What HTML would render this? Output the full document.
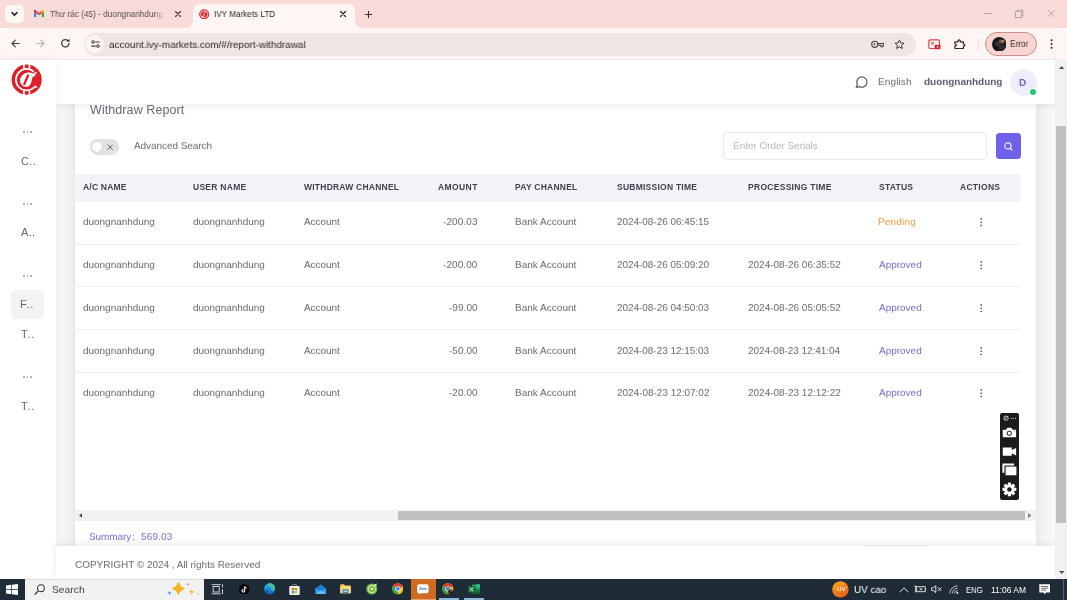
<!DOCTYPE html>
<html>
<head>
<meta charset="utf-8">
<title>IVY Markets LTD</title>
<style>
*{box-sizing:border-box;margin:0;padding:0}
html,body{width:1067px;height:600px;overflow:hidden;background:#fff;font-family:"Liberation Sans",sans-serif;}
#root{position:relative;width:1067px;height:600px;overflow:hidden;background:#fff}
#root>div,#root>svg{position:absolute}
.t{white-space:nowrap;line-height:1;will-change:transform}

/* ---------- browser chrome ---------- */
#tabbar{left:0;top:0;width:1067px;height:28px;background:#f9dcd9}
#toolbar{left:0;top:28px;width:1067px;height:32px;background:#fdf6f5;border-radius:7px 7px 0 0}
#toolline{left:0;top:59.2px;width:1067px;height:0.8px;background:#f7eeec}
#tabsearch{left:5px;top:5px;width:18.5px;height:17.5px;border-radius:5px;background:#fdf6f5}
#activetab{left:193px;top:4px;width:161.5px;height:25px;background:#fdf6f5;border-radius:7px 7px 0 0}
#urlpill{left:84.2px;top:32.6px;width:831.5px;height:23px;border-radius:11.5px;background:#f1e5e4}
#sitecirc{left:85.2px;top:34.7px;width:18.8px;height:18.8px;border-radius:50%;background:#fcf3f2}
#errpill{left:985px;top:32px;width:52px;height:24px;border-radius:12px;background:#f9d5d1;border:1px solid #c9918b}

/* ---------- app ---------- */
#appbg{left:0;top:60px;width:1056px;height:519px;background:#f8f8f8}
#sidebar{left:0;top:60px;width:55.5px;height:519px;background:#fff;box-shadow:0 0 10px rgba(34,41,47,.06)}
#header{left:55.5px;top:60px;width:999.5px;height:43.7px;background:#fff;box-shadow:0 2px 6px rgba(34,41,47,.09)}
#card{left:75px;top:96px;width:961px;height:452px;background:#fff;box-shadow:0 2px 16px rgba(34,41,47,.13)}
#footer{left:55.5px;top:546px;width:999.5px;height:33px;background:#fff;box-shadow:0 -2px 6px rgba(34,41,47,.09)}
#thead{left:75px;top:173.5px;width:945.5px;height:28px;background:#f3f3f8}
.rowline{left:75px;width:945.5px;height:1px;background:#f2f2f5}
.kebab{left:980.1px;width:3px}
.kebab i{display:block;width:1.8px;height:1.8px;border-radius:1px;background:#625e73;margin-bottom:0.7px}
.sdots{left:23px;width:10px;height:2px}
.sdots i{position:absolute;top:0;width:1.6px;height:1.6px;border-radius:1px;background:#9a9a9a}

/* scrollbars */
#vscroll{left:1055px;top:60px;width:12px;height:519px;background:#f1f1f1}
#vthumb{left:1056.3px;top:125.6px;width:9.7px;height:397px;background:#c1c1c1}
#hscroll{left:75px;top:509.5px;width:961px;height:11px;background:#f1f1f1}
#hthumb{left:398px;top:510.5px;width:626.5px;height:9px;background:#c1c1c1}

/* taskbar */
#taskbar{left:0;top:578.6px;width:1067px;height:21.4px;background:#1f2b36}
#tsearch{left:25px;top:579.1px;width:179.3px;height:21px;background:#f2f2f2;border-top:0.6px solid #dadada}
#zalobg{left:411px;top:578.6px;width:25px;height:21.4px;background:#cf6a20}
</style>
</head>
<body>
<div id="root">

<!-- TAB BAR -->
<div id="tabbar"></div>
<div id="tabsearch"></div>
<div id="toolbar"></div>
<div id="toolline"></div>
<div id="activetab"></div>

<!-- inverse corners of active tab -->
<svg style="left:185px;top:20px" width="8" height="8" viewBox="0 0 8 8"><path d="M8 0 V8 H0 A8 8 0 0 0 8 0Z" fill="#fdf6f5"/></svg>
<svg style="left:354.5px;top:20px" width="8" height="8" viewBox="0 0 8 8"><path d="M0 0 V8 H8 A8 8 0 0 1 0 0Z" fill="#fdf6f5"/></svg>
<!-- tab search chevron -->
<svg style="left:10px;top:10px" width="9" height="8" viewBox="0 0 9 8"><path d="M2 2.6 L4.5 5.1 L7 2.6" fill="none" stroke="#2a2424" stroke-width="1.5" stroke-linecap="round" stroke-linejoin="round"/></svg>
<!-- gmail icon -->
<svg style="left:34px;top:9.8px" width="10.2" height="7.5" viewBox="0 0 22 16">
 <path d="M0 2.2 V14.5 A1.5 1.5 0 0 0 1.5 16 H5 V6.2Z" fill="#4285f4"/>
 <path d="M22 2.2 V14.5 A1.5 1.5 0 0 1 20.5 16 H17 V6.2Z" fill="#34a853"/>
 <path d="M17 1.5 L19.2 0 A1.8 1.8 0 0 1 22 1.6 V3 L17 6.8Z" fill="#fbbc04"/>
 <path d="M5 1.5 L2.8 0 A1.8 1.8 0 0 0 0 1.6 V3 L5 6.8Z" fill="#c5221f"/>
 <path d="M5 1.5 L11 6 L17 1.5 V6.8 L11 11.3 L5 6.8Z" fill="#ea4335"/>
</svg>
<!-- tab close x (inactive) -->
<svg style="left:174px;top:10px" width="8" height="8" viewBox="0 0 8 8"><path d="M1.5 1.5 L6.5 6.5 M6.5 1.5 L1.5 6.5" stroke="#463e3e" stroke-width="1.15" stroke-linecap="round"/></svg>
<!-- favicon active tab -->
<svg style="left:198.9px;top:8.6px" width="10.4" height="10.4" viewBox="0 0 32 32">
 <circle cx="16" cy="16" r="15.5" fill="#e0202b"/>
 <circle cx="16" cy="16" r="11.3" fill="none" stroke="#fff" stroke-width="2.2"/>
 <path d="M20.5 9.5 C14 10 12 14 15 16.5 C18 19 16 23 10 23.5" fill="none" stroke="#fff" stroke-width="3" stroke-linecap="round"/>
</svg>
<!-- tab close x (active) -->
<svg style="left:339.3px;top:9.7px" width="8" height="8" viewBox="0 0 8 8"><path d="M1.5 1.5 L6.5 6.5 M6.5 1.5 L1.5 6.5" stroke="#2a2424" stroke-width="1.25" stroke-linecap="round"/></svg>
<!-- new tab plus -->
<svg style="left:364px;top:9.5px" width="9" height="9" viewBox="0 0 9 9"><path d="M4.5 1.2 V7.8 M1.2 4.5 H7.8" stroke="#3a3232" stroke-width="1.1" stroke-linecap="round"/></svg>
<!-- window controls -->
<svg style="left:984px;top:9px" width="72" height="10" viewBox="0 0 72 10">
 <path d="M0.5 4.5 H8" stroke="#b3a5a3" stroke-width="1" fill="none"/>
 <path d="M31.5 2.5 H37.5 V8.5 H31.5Z M33 2.3 V1 H39 V7 H37.7" stroke="#b3a5a3" stroke-width="1" fill="none"/>
 <path d="M63.6 1 L70.4 7.8 M70.4 1 L63.6 7.8" stroke="#b3a5a3" stroke-width="1" fill="none"/>
</svg>
<!-- back -->
<svg style="left:10.9px;top:39.3px" width="9" height="9" viewBox="0 0 10 10"><path d="M9.2 5 H1.4 M4.8 1.3 L1.1 5 L4.8 8.7" fill="none" stroke="#423b3b" stroke-width="1.25" stroke-linecap="round" stroke-linejoin="round"/></svg>
<!-- forward -->
<svg style="left:35.7px;top:39.3px" width="9" height="9" viewBox="0 0 10 10"><path d="M0.8 5 H8.6 M5.2 1.3 L8.9 5 L5.2 8.7" fill="none" stroke="#bdb2b0" stroke-width="1.25" stroke-linecap="round" stroke-linejoin="round"/></svg>
<!-- reload -->
<svg style="left:60.4px;top:38.2px" width="10.6" height="10.6" viewBox="0 0 11 11"><path d="M9.3 5.6 A3.8 3.8 0 1 1 8 2.6" fill="none" stroke="#423b3b" stroke-width="1.3" stroke-linecap="round"/><path d="M9.9 0.7 V4 H6.6Z" fill="#423b3b"/></svg>


<div id="urlpill"></div>
<div id="sitecirc"></div>
<div id="errpill"></div>
<!-- site info (tune) icon -->
<svg style="left:90.6px;top:40.2px" width="9" height="8.1" viewBox="0 0 10 9">
 <circle cx="2.3" cy="2.2" r="1.45" fill="none" stroke="#3b3535" stroke-width="1.1"/><path d="M5.2 2.2 H9.2" stroke="#3b3535" stroke-width="1.2" stroke-linecap="round"/>
 <circle cx="7.7" cy="6.8" r="1.45" fill="none" stroke="#3b3535" stroke-width="1.1"/><path d="M0.8 6.8 H4.8" stroke="#3b3535" stroke-width="1.2" stroke-linecap="round"/>
</svg>
<!-- key icon -->
<svg style="left:870.6px;top:40px" width="13.4" height="9" viewBox="0 0 13.4 9">
 <circle cx="3.8" cy="4.3" r="3.1" fill="none" stroke="#4a4242" stroke-width="1.15"/><circle cx="3.5" cy="4.3" r="0.95" fill="#4a4242"/>
 <path d="M6.9 3.5 H12.6 V5.3 H11.9 V6.8 H9.9 V5.3 H6.9" fill="none" stroke="#4a4242" stroke-width="1.05" stroke-linejoin="round"/>
</svg>
<!-- star -->
<svg style="left:894.4px;top:38.9px" width="10.9" height="10.4" viewBox="0 0 24 23"><path d="M12 2.2 L14.9 8.6 L21.8 9.4 L16.7 14.1 L18.1 21 L12 17.5 L5.9 21 L7.3 14.1 L2.2 9.4 L9.1 8.6Z" fill="none" stroke="#3b3535" stroke-width="2.2" stroke-linejoin="round"/></svg>
<!-- red screen ext -->
<svg style="left:928px;top:38.5px" width="13" height="11" viewBox="0 0 13 11">
 <rect x="0.9" y="0.9" width="10.6" height="8.6" rx="1.3" fill="none" stroke="#d4464c" stroke-width="1.2"/>
 <path d="M2.8 2.6 L5 4.8 M5.2 2.8 V5 H3" stroke="#d4464c" stroke-width="0.9" fill="none"/>
 <rect x="6.6" y="5.7" width="5.9" height="4.6" rx="0.8" fill="#d9232e"/><circle cx="9.5" cy="8" r="0.8" fill="#fff"/>
</svg>
<!-- puzzle -->
<svg style="left:953px;top:37.5px" width="14" height="12" viewBox="0 0 14 12"><path d="M1.9 4.1 Q1.9 3.8 2.2 3.8 H5 V3.1 A1.15 1.15 0 0 1 7.3 3.1 V3.8 H10.1 Q10.4 3.8 10.4 4.1 V6 H10.8 A1.05 1.05 0 0 1 10.8 8.1 H10.4 V10.2 Q10.4 10.5 10.1 10.5 H2.2 Q1.9 10.5 1.9 10.2 V8.1 H2.3 A1.05 1.05 0 0 0 2.3 6 H1.9Z" fill="none" stroke="#2f2a2a" stroke-width="1.2" stroke-linejoin="round"/></svg>
<!-- separator -->
<div style="left:977.6px;top:38.5px;width:1px;height:11px;background:#f4dedb"></div>
<!-- profile avatar -->
<svg style="left:991.5px;top:36.5px" width="14.5" height="14.5" viewBox="0 0 29 29">
 <defs><clipPath id="avc"><circle cx="14.5" cy="14.5" r="14.5"/></clipPath></defs>
 <g clip-path="url(#avc)"><rect width="29" height="29" fill="#1b1a1d"/>
 <ellipse cx="19" cy="9" rx="6" ry="4" fill="#6b5a4c"/><ellipse cx="21" cy="8" rx="3" ry="2" fill="#a58b70"/>
 <ellipse cx="12" cy="15" rx="5" ry="6" fill="#3a3538"/><ellipse cx="20" cy="21" rx="7" ry="5" fill="#2d2a31"/>
 <ellipse cx="8" cy="22" rx="5" ry="4" fill="#121114"/></g>
</svg>
<!-- menu dots -->
<svg style="left:1049.8px;top:39px" width="3.2" height="10" viewBox="0 0 3.2 10"><circle cx="1.6" cy="1.3" r="1.05" fill="#2f2a2a"/><circle cx="1.6" cy="5" r="1.05" fill="#2f2a2a"/><circle cx="1.6" cy="8.7" r="1.05" fill="#2f2a2a"/></svg>


<!-- APP -->
<div id="appbg"></div>
<div id="card"></div>
<div id="header"></div>
<div id="sidebar"></div>
<div id="footer"></div>
<div id="thead"></div>
<div class="rowline" style="top:243.7px"></div>
<div class="rowline" style="top:285.9px"></div>
<div class="rowline" style="top:328.9px"></div>
<div class="rowline" style="top:371.7px"></div>

<!-- logo -->
<svg id="logo" style="left:5px;top:60px" width="45" height="40" viewBox="0 0 675 600">
 <circle cx="325" cy="295" r="200" fill="none" stroke="#d9202b" stroke-width="52"/>
 <circle cx="325" cy="295" r="148" fill="#dc202b"/>
 <path d="M325 295 L462 142 A205 205 0 0 1 476 436Z" fill="#e0202b"/>
 <rect x="270" y="60" width="26" height="64" fill="#fff"/><rect x="354" y="60" width="26" height="64" fill="#fff"/>
 <rect x="270" y="466" width="26" height="64" fill="#fff"/><rect x="354" y="466" width="26" height="64" fill="#fff"/>
 <path d="M412 200 C340 168 245 210 228 290 C216 355 265 408 322 402 C375 396 392 352 400 302 C406 262 428 238 460 236 C455 218 436 206 412 200Z" fill="#fff"/>
 <path d="M345 232 L290 362" stroke="#d9202b" stroke-width="34" stroke-linecap="round"/>
 <path d="M436 208 L474 186" stroke="#fff" stroke-width="26"/>
 <path d="M444 388 L478 414" stroke="#fff" stroke-width="26"/>
</svg>
<!-- chat icon -->
<svg style="left:855.3px;top:76px" width="13.6" height="12.6" viewBox="0 0 13 12"><path d="M6.8 0.9 A4.9 4.9 0 1 1 4.2 10.1 L1.1 10.9 L2.3 8.2 A4.9 4.9 0 0 1 6.8 0.9Z" fill="none" stroke="#625f6e" stroke-width="1.2" stroke-linejoin="round"/></svg>
<!-- avatar -->
<div style="left:1009.6px;top:69.1px;width:27.4px;height:27.4px;border-radius:50%;background:#eeedfc"></div>
<div style="left:1029.6px;top:88.7px;width:6.7px;height:6.7px;border-radius:50%;background:#28c76f;box-shadow:0 0 0 0.7px #fff"></div>
<!-- sidebar -->
<div style="left:10.7px;top:290px;width:33.3px;height:28.7px;border-radius:4.5px;background:#f3f3f3"></div>
<div class="sdots" style="top:131.2px"><i style="left:0"></i><i style="left:3.7px"></i><i style="left:7.4px"></i></div>
<div class="sdots" style="top:203px"><i style="left:0"></i><i style="left:3.7px"></i><i style="left:7.4px"></i></div>
<div class="sdots" style="top:275.2px"><i style="left:0"></i><i style="left:3.7px"></i><i style="left:7.4px"></i></div>
<div class="sdots" style="top:376px"><i style="left:0"></i><i style="left:3.7px"></i><i style="left:7.4px"></i></div>
<!-- toggle -->
<div style="left:89.8px;top:139px;width:28.8px;height:15.6px;border-radius:8px;background:#e2e2e2"></div>
<div style="left:92.2px;top:141.7px;width:10.2px;height:10.2px;border-radius:50%;background:#fff;box-shadow:0 0.5px 1.2px rgba(0,0,0,.15)"></div>
<svg style="left:107.1px;top:144px" width="6.4" height="6.4" viewBox="0 0 6.4 6.4"><path d="M0.7 0.7 L5.7 5.7 M5.7 0.7 L0.7 5.7" stroke="#5f5f5f" stroke-width="1"/></svg>
<!-- search input + button -->
<div style="left:723px;top:132.1px;width:264px;height:27.6px;border:1px solid #e9e8ed;border-radius:4px;background:#fff"></div>
<div style="left:996px;top:133px;width:25.3px;height:26px;border-radius:3.5px;background:#6e62ec"></div>
<svg style="left:1003px;top:140.5px" width="11" height="11" viewBox="0 0 11 11"><circle cx="4.9" cy="4.9" r="3.1" fill="none" stroke="#fff" stroke-width="1.05"/><path d="M7.2 7.2 L9.3 9.3" stroke="#fff" stroke-width="1.05" stroke-linecap="round"/></svg>
<!-- kebabs -->
<svg style="left:979.7px;top:218.4px" width="2.4" height="8.4" viewBox="0 0 2.4 8.4"><rect x="0.4" y="0.1" width="1.6" height="1.6" rx="0.4" fill="#5b586b"/><rect x="0.4" y="3.4" width="1.6" height="1.6" rx="0.4" fill="#5b586b"/><rect x="0.4" y="6.7" width="1.6" height="1.6" rx="0.4" fill="#5b586b"/></svg>
<svg style="left:979.7px;top:261.2px" width="2.4" height="8.4" viewBox="0 0 2.4 8.4"><rect x="0.4" y="0.1" width="1.6" height="1.6" rx="0.4" fill="#5b586b"/><rect x="0.4" y="3.4" width="1.6" height="1.6" rx="0.4" fill="#5b586b"/><rect x="0.4" y="6.7" width="1.6" height="1.6" rx="0.4" fill="#5b586b"/></svg>
<svg style="left:979.7px;top:303.9px" width="2.4" height="8.4" viewBox="0 0 2.4 8.4"><rect x="0.4" y="0.1" width="1.6" height="1.6" rx="0.4" fill="#5b586b"/><rect x="0.4" y="3.4" width="1.6" height="1.6" rx="0.4" fill="#5b586b"/><rect x="0.4" y="6.7" width="1.6" height="1.6" rx="0.4" fill="#5b586b"/></svg>
<svg style="left:979.7px;top:346.6px" width="2.4" height="8.4" viewBox="0 0 2.4 8.4"><rect x="0.4" y="0.1" width="1.6" height="1.6" rx="0.4" fill="#5b586b"/><rect x="0.4" y="3.4" width="1.6" height="1.6" rx="0.4" fill="#5b586b"/><rect x="0.4" y="6.7" width="1.6" height="1.6" rx="0.4" fill="#5b586b"/></svg>
<svg style="left:979.7px;top:389.3px" width="2.4" height="8.4" viewBox="0 0 2.4 8.4"><rect x="0.4" y="0.1" width="1.6" height="1.6" rx="0.4" fill="#5b586b"/><rect x="0.4" y="3.4" width="1.6" height="1.6" rx="0.4" fill="#5b586b"/><rect x="0.4" y="6.7" width="1.6" height="1.6" rx="0.4" fill="#5b586b"/></svg>
<!-- partially hidden pagination line -->
<div style="left:866px;top:544.7px;width:60px;height:1px;background:#e6e6ea"></div>


<!-- scrollbars -->
<div id="vscroll"></div>
<div id="vthumb"></div>
<div id="hscroll"></div>
<div id="hthumb"></div>

<svg style="left:1058.6px;top:65.6px" width="5.2" height="3" viewBox="0 0 5.2 3"><path d="M2.6 0.1 L5.1 2.9 H0.1Z" fill="#505050"/></svg>
<svg style="left:1058.6px;top:571.2px" width="5.2" height="3" viewBox="0 0 5.2 3"><path d="M2.6 2.9 L5.1 0.1 H0.1Z" fill="#484848"/></svg>
<svg style="left:79px;top:512.7px" width="3.4" height="5.2" viewBox="0 0 3.4 5.2"><path d="M0.1 2.6 L3.3 0.1 V5.1Z" fill="#484848"/></svg>
<svg style="left:1028.2px;top:512.7px" width="3.4" height="5.2" viewBox="0 0 3.4 5.2"><path d="M3.3 2.6 L0.1 0.1 V5.1Z" fill="#7a7a7a"/></svg>

<!-- right-side capture widget -->
<div style="left:1000.3px;top:412.8px;width:18.5px;height:87.3px;border-radius:2px;background:#1b1b1b"></div>
<svg style="left:1000.3px;top:412.8px" width="18.5" height="87.3" viewBox="0 0 110 523">
 <!-- tiny logo + dots -->
 <circle cx="36" cy="31" r="13" fill="none" stroke="#e9e9e9" stroke-width="5"/><path d="M26 41 L47 20" stroke="#e9e9e9" stroke-width="5"/>
 <circle cx="67" cy="32" r="3.6" fill="#ddd"/><circle cx="80" cy="32" r="3.6" fill="#ddd"/><circle cx="93" cy="32" r="3.6" fill="#ddd"/>
 <!-- camera -->
 <path d="M16 100 H36 L43 88 H68 L75 100 H96 V145 H16Z" fill="#fff"/>
 <circle cx="55" cy="121" r="15" fill="#1b1b1b"/><circle cx="55" cy="121" r="9.5" fill="#fff"/><circle cx="86" cy="108" r="2.6" fill="#1b1b1b"/>
 <!-- video -->
 <path d="M16 207 H70 V222 L96 209 V254 L70 241 V256 H16Z" fill="#fff"/>
 <!-- stack -->
 <path d="M14 303 H84 V314 H26 V358 H14Z" fill="#fff"/><rect x="33" y="321" width="65" height="52" fill="#fff"/>
 <!-- gear -->
 <g transform="translate(56,458)"><g fill="#fff">
  <circle r="30"/>
  <rect x="-9.5" y="-41" width="19" height="82" rx="2"/>
  <rect x="-9.5" y="-41" width="19" height="82" rx="2" transform="rotate(45)"/>
  <rect x="-9.5" y="-41" width="19" height="82" rx="2" transform="rotate(90)"/>
  <rect x="-9.5" y="-41" width="19" height="82" rx="2" transform="rotate(135)"/>
 </g><circle r="13.5" fill="#1b1b1b"/></g>
</svg>


<!-- TASKBAR -->
<div id="taskbar"></div>
<div id="tsearch"></div>
<div id="zalobg"></div>

<!-- windows logo -->
<svg style="left:6.2px;top:584.3px" width="12" height="11" viewBox="0 0 12 11"><path d="M0 1.6 L5.2 0.8 V5.2 H0Z M5.9 0.7 L12 0 V5.2 H5.9Z M0 5.9 H5.2 V10.2 L0 9.4Z M5.9 5.9 H12 V11 L5.9 10.3Z" fill="#fff"/></svg>
<!-- search magnifier -->
<svg style="left:33.6px;top:584.3px" width="11.5" height="11" viewBox="0 0 11.5 11"><circle cx="6.9" cy="4.2" r="3.4" fill="none" stroke="#3a3a3a" stroke-width="1.1"/><path d="M4.5 6.8 L0.9 10.2" stroke="#3a3a3a" stroke-width="1.2" stroke-linecap="round"/></svg>
<!-- sparkles -->
<svg style="left:166px;top:581px" width="36" height="18" viewBox="0 0 36 18">
 <path d="M12.4 2 C13.3 5.4 14.4 6.5 17.8 7.4 C14.4 8.3 13.3 9.4 12.4 12.8 C11.5 9.4 10.4 8.3 7 7.4 C10.4 6.5 11.5 5.4 12.4 2Z" fill="#f6b51c" stroke="#f6b51c" stroke-width="1.5" stroke-linejoin="round"/>
 <path d="M25.6 7.6 C25.9 9.8 26.7 10.6 28.9 10.9 C26.7 11.2 25.9 12 25.6 14.2 C25.3 12 24.5 11.2 22.3 10.9 C24.5 10.6 25.3 9.8 25.6 7.6Z" fill="#f2c64a"/>
 <path d="M3.6 9.8 C3.8 11.2 4.4 11.8 5.8 12 C4.4 12.2 3.8 12.8 3.6 14.2 C3.4 12.8 2.8 12.2 1.4 12 C2.8 11.8 3.4 11.2 3.6 9.8Z" fill="#3f8fe0"/>
 <circle cx="22" cy="3.2" r="0.9" fill="#e8678a"/><circle cx="32" cy="13" r="0.8" fill="#c9b77a"/>
</svg>
<!-- task view -->
<svg style="left:210.5px;top:584px" width="12.5" height="10.5" viewBox="0 0 12.5 10.5">
 <rect x="2.2" y="2.5" width="6" height="5.5" fill="none" stroke="#c9cdd1" stroke-width="1"/>
 <path d="M0.6 0.7 H9.8 M0.6 9.8 H9.8" stroke="#c9cdd1" stroke-width="1"/>
 <path d="M11.5 0.3 V3.4 M11.5 5.2 V10.2" stroke="#c9cdd1" stroke-width="1"/>
</svg>
<!-- tiktok -->
<svg style="left:238.5px;top:583.6px" width="10.8" height="10.8" viewBox="0 0 22 22"><circle cx="11" cy="11" r="11" fill="#060606"/>
 <path d="M11.6 5 V13.6 A2.6 2.6 0 1 1 9.2 11" fill="none" stroke="#fff" stroke-width="2.1"/><path d="M11.6 5.4 C12.2 7.4 13.6 8.4 15.6 8.5" fill="none" stroke="#fff" stroke-width="2.1"/></svg>
<!-- edge -->
<svg style="left:263.5px;top:583.3px" width="11.6" height="11.6" viewBox="0 0 24 24">
 <defs><linearGradient id="eg" x1="0" y1="0" x2="1" y2="1"><stop offset="0" stop-color="#35c1f1"/><stop offset=".55" stop-color="#1b7fd8"/><stop offset="1" stop-color="#0c59a4"/></linearGradient></defs>
 <circle cx="12" cy="12" r="11.5" fill="url(#eg)"/>
 <path d="M9 1 C13 -0.2 18 1 21 4.5 C23.5 7.8 23.8 11 23 13 C22 15.8 19.5 16.6 17.2 16.2 C15 15.8 14.2 14.6 14.8 13 C15.6 10.8 13.8 8.6 11 8.4 C9 6 8 3 9 1Z" fill="#45d19a" opacity=".8"/>
 <path d="M6.5 12.5 C6 16.5 8.5 20.5 13 21.5 C9 22.5 5 20 3.5 16.5 C3 14 4.5 12.5 6.5 12.5Z" fill="#0b4f94"/>
</svg>
<!-- store -->
<svg style="left:289.4px;top:583.6px" width="11" height="11.2" viewBox="0 0 22 22.4">
 <path d="M7 4.5 V2.6 A1.6 1.6 0 0 1 8.6 1 H13.4 A1.6 1.6 0 0 1 15 2.6 V4.5" fill="none" stroke="#aab0b5" stroke-width="1.3"/>
 <rect x="0.6" y="4.2" width="20.8" height="17.6" rx="2" fill="#f4f4f4"/>
 <rect x="5.6" y="8" width="4.8" height="4.8" fill="#f25022"/><rect x="11.6" y="8" width="4.8" height="4.8" fill="#7fba00"/>
 <rect x="5.6" y="14" width="4.8" height="4.8" fill="#00a4ef"/><rect x="11.6" y="14" width="4.8" height="4.8" fill="#ffb900"/>
</svg>
<!-- mail -->
<svg style="left:314.8px;top:583.8px" width="11.6" height="10.6" viewBox="0 0 23 21">
 <path d="M1 8.5 L11.5 0.8 L22 8.5 V20 H1Z" fill="#1f7fd0"/>
 <path d="M1 8.8 L11.5 15.4 L22 8.8 V20.2 H1Z" fill="#3aa4ee"/>
 <path d="M1 20.2 L11.5 12.6 L22 20.2Z" fill="#62c0fa"/>
</svg>
<!-- explorer -->
<svg style="left:340.4px;top:584.3px" width="11" height="9.4" viewBox="0 0 22 18.8">
 <path d="M0.5 2 A1.3 1.3 0 0 1 1.8 0.7 H8 L10 2.8 H20.2 A1.3 1.3 0 0 1 21.5 4.1 V17 A1.3 1.3 0 0 1 20.2 18.3 H1.8 A1.3 1.3 0 0 1 0.5 17Z" fill="#f5c84a"/>
 <rect x="0.5" y="5.2" width="21" height="13.1" rx="1" fill="#fbdc74"/>
 <rect x="5" y="10.4" width="12" height="7.9" fill="#3b86c9"/><rect x="7.4" y="13.2" width="7.2" height="2.3" fill="#d9e8f5"/>
</svg>
<!-- coc coc (green) -->
<svg style="left:365.8px;top:583.2px" width="12" height="11.8" viewBox="0 0 24 23.6">
 <circle cx="11.6" cy="12" r="11.2" fill="#6db33f"/>
 <circle cx="11.6" cy="12" r="7" fill="none" stroke="#c6e59a" stroke-width="2.6"/>
 <circle cx="11.6" cy="12" r="2.6" fill="#d9efb8"/>
 <path d="M15.5 3.5 L22 1 L19.8 7.2Z" fill="#e7f2d6"/>
</svg>
<!-- chrome -->
<svg style="left:391.5px;top:583.3px" width="11.6" height="11.6" viewBox="0 0 24 24">
 <circle cx="12" cy="12" r="11.5" fill="#fbbf12"/>
 <path d="M12 12 L2.04 6.25 A11.5 11.5 0 0 1 21.96 6.25Z" fill="#e33b2e"/>
 <path d="M12 12 L2.04 6.25 A11.5 11.5 0 0 0 12 23.5Z" fill="#2da94f"/>
 <path d="M12 12 L21.96 6.25 H12Z" fill="#e33b2e"/>
 <circle cx="12" cy="12" r="5.4" fill="#fff"/><circle cx="12" cy="12" r="4.2" fill="#4285f4"/>
</svg>
<!-- zalo -->
<svg style="left:417px;top:583.8px" width="11.8" height="10.6" viewBox="0 0 23.6 21.2">
 <path d="M4 0.5 H19.6 A3.5 3.5 0 0 1 23.1 4 V15 A3.5 3.5 0 0 1 19.6 18.5 H9 L4.5 20.8 L5 18.3 A3.5 3.5 0 0 1 0.5 15 V4 A3.5 3.5 0 0 1 4 0.5Z" fill="#fdfdfd"/>
 <text x="11.8" y="12.4" font-family="Liberation Sans, sans-serif" font-weight="bold" font-size="7.4" fill="#1b6fe0" text-anchor="middle">Zalo</text>
</svg>
<!-- chrome (profile) -->
<svg style="left:442.4px;top:583.3px" width="11.6" height="11.6" viewBox="0 0 24 24">
 <circle cx="12" cy="12" r="11.5" fill="#f2b51a"/>
 <path d="M12 12 L2.04 6.25 A11.5 11.5 0 0 1 21.96 6.25Z" fill="#d9402f"/>
 <path d="M12 12 L2.04 6.25 A11.5 11.5 0 0 0 12 23.5Z" fill="#3a9c4c"/>
 <path d="M12 12 L21.96 6.25 H12Z" fill="#d9402f"/>
 <circle cx="12" cy="12" r="5.4" fill="#f1f1f1"/><circle cx="12" cy="12" r="4.2" fill="#4a7fd4"/>
 <circle cx="17.5" cy="18.5" r="5" fill="#25201d"/><circle cx="18.5" cy="17" r="1.6" fill="#7a6650"/>
</svg>
<!-- excel -->
<svg style="left:467.8px;top:583.8px" width="12.2" height="10.6" viewBox="0 0 24.4 21.2">
 <rect x="8" y="0.8" width="16" height="19.6" rx="1.2" fill="#21a366"/>
 <rect x="16" y="0.8" width="8" height="4.9" fill="#33c481"/><rect x="16" y="5.7" width="8" height="4.9" fill="#21a366"/><rect x="16" y="10.6" width="8" height="4.9" fill="#107c41"/><rect x="16" y="15.5" width="8" height="4.9" fill="#185c37"/>
 <rect x="8" y="5.7" width="8" height="4.9" fill="#107c41"/><rect x="8" y="10.6" width="8" height="9.8" fill="#185c37"/>
 <rect x="0.4" y="4.4" width="13.6" height="12.6" rx="1.2" fill="#0f773d"/>
 <path d="M4 7 L10.4 14.4 M10.4 7 L4 14.4" stroke="#fff" stroke-width="1.9"/>
</svg>
<!-- running indicators -->
<div style="left:439px;top:598.2px;width:19.7px;height:1.8px;background:#8eb9de"></div>
<div style="left:464.3px;top:598.2px;width:19.7px;height:1.8px;background:#8eb9de"></div>
<div style="left:411px;top:598.8px;width:25px;height:1.2px;background:#e9a36b"></div>

<!-- UV badge -->
<svg style="left:832.3px;top:581px" width="16.8" height="16.8" viewBox="0 0 34 34"><defs><linearGradient id="uvg" x1="0.2" y1="0" x2="0.8" y2="1"><stop offset="0" stop-color="#f9a31c"/><stop offset="1" stop-color="#ea5a1d"/></linearGradient></defs><circle cx="17" cy="17" r="16.6" fill="url(#uvg)"/></svg>
<!-- tray chevron -->
<svg style="left:898.5px;top:586.6px" width="10" height="6" viewBox="0 0 10 6"><path d="M0.7 5.3 L5 0.9 L9.3 5.3" fill="none" stroke="#f2f2f2" stroke-width="0.9"/></svg>
<!-- battery/plug -->
<svg style="left:914px;top:585.4px" width="12.4" height="8" viewBox="0 0 12.4 8">
 <rect x="2.6" y="1.7" width="8.6" height="5" fill="none" stroke="#e6e6e6" stroke-width="0.9"/><rect x="11.3" y="3.1" width="0.9" height="2.2" fill="#e6e6e6"/>
 <path d="M5.4 2.9 L8.4 5.5 M8.4 2.9 L5.4 5.5" stroke="#e6e6e6" stroke-width="0.8"/>
 <path d="M1.4 0.5 V2.6 M0.5 1.4 H2.3 M1.4 2.6 V7.4" stroke="#e6e6e6" stroke-width="0.8"/>
</svg>
<!-- speaker muted -->
<svg style="left:930.8px;top:585.2px" width="11.4" height="8.4" viewBox="0 0 11.4 8.4">
 <path d="M0.6 2.8 H2.4 L4.8 0.7 V7.7 L2.4 5.6 H0.6Z" fill="none" stroke="#f0f0f0" stroke-width="0.9" stroke-linejoin="round"/>
 <path d="M6.8 2.4 L10.4 6 M10.4 2.4 L6.8 6" stroke="#f0f0f0" stroke-width="0.9"/>
</svg>
<!-- wifi -->
<svg style="left:949px;top:585.2px" width="10" height="9" viewBox="0 0 10 9">
 <path d="M0.8 8.4 A8 8 0 0 1 8.6 0.8" fill="none" stroke="#d8d8d8" stroke-width="0.9"/>
 <path d="M3.3 8.4 A5.5 5.5 0 0 1 8.6 3.2" fill="none" stroke="#d8d8d8" stroke-width="0.9"/>
 <path d="M5.7 8.4 A3 3 0 0 1 8.6 5.6" fill="none" stroke="#d8d8d8" stroke-width="0.9"/>
 <circle cx="8.4" cy="8" r="0.9" fill="#fff"/>
</svg>
<!-- notification -->
<svg style="left:1038.6px;top:584px" width="11.4" height="10.8" viewBox="0 0 11.4 10.8">
 <path d="M0.3 0.3 H11.1 V8.4 H7 L5.7 10.3 L4.4 8.4 H0.3Z" fill="#fff"/>
 <path d="M2.2 2.5 H9.2 M2.2 4.3 H9.2 M2.2 6.1 H7" stroke="#1f2b36" stroke-width="0.7"/>
</svg>
<div style="left:1063px;top:579px;width:1px;height:21px;background:#5a646d"></div>


<div class="t" id="t0" style="left:50.26px;top:10px;font-size:8.8px;color:#554d4d;transform-origin:0 7px;transform:scale(0.9369,1);">Thư rác (45) - duongnanhdung</div>
<div class="t" id="t1" style="left:213.76px;top:10px;font-size:8.8px;color:#2b2626;transform-origin:0 7px;transform:scale(0.9241,1);">IVY Markets LTD</div>
<div class="t" id="t2" style="left:108.98px;top:40px;font-size:10.0px;color:#2b2727;transform-origin:0 8px;transform:scale(0.9910,0.875);">account.ivy-markets.com/#/report-withdrawal</div>
<div class="t" id="t3" style="left:1009.50px;top:39px;font-size:10.0px;color:#3a2b2a;transform-origin:0 8px;transform:scale(0.8254,0.875);">Error</div>
<div class="t" id="t4" style="left:878.40px;top:77px;font-size:10.0px;color:#6b6975;letter-spacing:0.117px;transform-origin:0 8px;transform:scaleY(0.875);">English</div>
<div class="t" id="t5" style="left:923.59px;top:77px;font-size:10.0px;color:#605a74;font-weight:bold;letter-spacing:-0.041px;transform-origin:0 8px;transform:scaleY(0.875);">duongnanhdung</div>
<div class="t" id="t6" style="left:1018.82px;top:78px;font-size:10.0px;color:#6d62d4;font-weight:bold;transform-origin:0 8px;transform:scaleY(0.875);">D</div>
<div class="t" id="t7" style="left:20.70px;top:156px;font-size:11px;color:#686868;letter-spacing:0.400px;">C..</div>
<div class="t" id="t8" style="left:21.00px;top:227px;font-size:11px;color:#686868;letter-spacing:0.354px;">A..</div>
<div class="t" id="t9" style="left:20.30px;top:299px;font-size:11px;color:#686868;letter-spacing:0.900px;">F..</div>
<div class="t" id="t10" style="left:20.52px;top:329px;font-size:11px;color:#686868;letter-spacing:0.900px;">T..</div>
<div class="t" id="t11" style="left:20.52px;top:401px;font-size:11px;color:#686868;letter-spacing:0.900px;">T..</div>
<div class="t" id="t12" style="left:90.00px;top:104px;font-size:12.5px;color:#6a6876;letter-spacing:0.083px;">Withdraw Report</div>
<div class="t" id="t13" style="left:133.70px;top:141px;font-size:10.0px;color:#6b6975;letter-spacing:-0.066px;transform-origin:0 8px;transform:scaleY(0.875);">Advanced Search</div>
<div class="t" id="t14" style="left:733.30px;top:141px;font-size:10.0px;color:#b8b7c0;letter-spacing:-0.044px;transform-origin:0 8px;transform:scaleY(0.875);">Enter Order Serials</div>
<div class="t" id="t15" style="left:82.76px;top:183px;font-size:8.5px;color:#43414d;font-weight:bold;letter-spacing:0.212px;">A/C NAME</div>
<div class="t" id="t16" style="left:193.12px;top:183px;font-size:8.5px;color:#43414d;font-weight:bold;letter-spacing:0.279px;">USER NAME</div>
<div class="t" id="t17" style="left:303.80px;top:183px;font-size:8.5px;color:#43414d;font-weight:bold;letter-spacing:0.229px;">WITHDRAW CHANNEL</div>
<div class="t" id="t18" style="left:437.76px;top:183px;font-size:8.5px;color:#43414d;font-weight:bold;letter-spacing:0.407px;">AMOUNT</div>
<div class="t" id="t19" style="left:515.16px;top:183px;font-size:8.5px;color:#43414d;font-weight:bold;letter-spacing:0.247px;">PAY CHANNEL</div>
<div class="t" id="t20" style="left:617.09px;top:183px;font-size:8.5px;color:#43414d;font-weight:bold;letter-spacing:0.244px;">SUBMISSION TIME</div>
<div class="t" id="t21" style="left:747.56px;top:183px;font-size:8.5px;color:#43414d;font-weight:bold;letter-spacing:0.289px;">PROCESSING TIME</div>
<div class="t" id="t22" style="left:879.19px;top:183px;font-size:8.5px;color:#43414d;font-weight:bold;letter-spacing:0.253px;">STATUS</div>
<div class="t" id="t23" style="left:960.36px;top:183px;font-size:8.5px;color:#43414d;font-weight:bold;letter-spacing:0.294px;">ACTIONS</div>
<div class="t" id="t24" style="left:82.68px;top:217px;font-size:10.0px;color:#6b6975;letter-spacing:-0.033px;transform-origin:0 8px;transform:scaleY(0.875);">duongnanhdung</div>
<div class="t" id="t25" style="left:192.98px;top:217px;font-size:10.0px;color:#6b6975;letter-spacing:-0.033px;transform-origin:0 8px;transform:scaleY(0.875);">duongnanhdung</div>
<div class="t" id="t26" style="left:304.00px;top:217px;font-size:10.0px;color:#6b6975;letter-spacing:-0.056px;transform-origin:0 8px;transform:scaleY(0.875);">Account</div>
<div class="t" id="t27" style="left:442.92px;top:217px;font-size:10.0px;color:#6b6975;letter-spacing:0.092px;transform-origin:0 8px;transform:scaleY(0.875);">-200.03</div>
<div class="t" id="t28" style="left:514.60px;top:217px;font-size:10.0px;color:#6b6975;letter-spacing:0.015px;transform-origin:0 8px;transform:scaleY(0.875);">Bank Account</div>
<div class="t" id="t29" style="left:617.22px;top:217px;font-size:10.0px;color:#6b6975;letter-spacing:-0.048px;transform-origin:0 8px;transform:scaleY(0.875);">2024-08-26 06:45:15</div>
<div class="t" id="t30" style="left:878.40px;top:217px;font-size:10.0px;color:#f49b42;letter-spacing:0.183px;transform-origin:0 8px;transform:scaleY(0.875);">Pending</div>
<div class="t" id="t31" style="left:82.68px;top:260px;font-size:10.0px;color:#6b6975;letter-spacing:-0.033px;transform-origin:0 8px;transform:scaleY(0.875);">duongnanhdung</div>
<div class="t" id="t32" style="left:192.98px;top:260px;font-size:10.0px;color:#6b6975;letter-spacing:-0.033px;transform-origin:0 8px;transform:scaleY(0.875);">duongnanhdung</div>
<div class="t" id="t33" style="left:304.00px;top:260px;font-size:10.0px;color:#6b6975;letter-spacing:-0.056px;transform-origin:0 8px;transform:scaleY(0.875);">Account</div>
<div class="t" id="t34" style="left:442.92px;top:260px;font-size:10.0px;color:#6b6975;letter-spacing:0.082px;transform-origin:0 8px;transform:scaleY(0.875);">-200.00</div>
<div class="t" id="t35" style="left:514.60px;top:260px;font-size:10.0px;color:#6b6975;letter-spacing:0.015px;transform-origin:0 8px;transform:scaleY(0.875);">Bank Account</div>
<div class="t" id="t36" style="left:617.22px;top:260px;font-size:10.0px;color:#6b6975;letter-spacing:-0.050px;transform-origin:0 8px;transform:scaleY(0.875);">2024-08-26 05:09:20</div>
<div class="t" id="t37" style="left:747.62px;top:260px;font-size:10.0px;color:#6b6975;letter-spacing:-0.006px;transform-origin:0 8px;transform:scaleY(0.875);">2024-08-26 06:35:52</div>
<div class="t" id="t38" style="left:879.40px;top:260px;font-size:10.0px;color:#776bd2;letter-spacing:-0.014px;transform-origin:0 8px;transform:scaleY(0.875);">Approved</div>
<div class="t" id="t39" style="left:82.68px;top:303px;font-size:10.0px;color:#6b6975;letter-spacing:-0.033px;transform-origin:0 8px;transform:scaleY(0.875);">duongnanhdung</div>
<div class="t" id="t40" style="left:192.98px;top:303px;font-size:10.0px;color:#6b6975;letter-spacing:-0.033px;transform-origin:0 8px;transform:scaleY(0.875);">duongnanhdung</div>
<div class="t" id="t41" style="left:304.00px;top:303px;font-size:10.0px;color:#6b6975;letter-spacing:-0.056px;transform-origin:0 8px;transform:scaleY(0.875);">Account</div>
<div class="t" id="t42" style="left:448.72px;top:303px;font-size:10.0px;color:#6b6975;letter-spacing:0.036px;transform-origin:0 8px;transform:scaleY(0.875);">-99.00</div>
<div class="t" id="t43" style="left:514.60px;top:303px;font-size:10.0px;color:#6b6975;letter-spacing:0.015px;transform-origin:0 8px;transform:scaleY(0.875);">Bank Account</div>
<div class="t" id="t44" style="left:617.22px;top:303px;font-size:10.0px;color:#6b6975;letter-spacing:-0.047px;transform-origin:0 8px;transform:scaleY(0.875);">2024-08-26 04:50:03</div>
<div class="t" id="t45" style="left:747.62px;top:303px;font-size:10.0px;color:#6b6975;letter-spacing:-0.006px;transform-origin:0 8px;transform:scaleY(0.875);">2024-08-26 05:05:52</div>
<div class="t" id="t46" style="left:879.40px;top:303px;font-size:10.0px;color:#776bd2;letter-spacing:-0.014px;transform-origin:0 8px;transform:scaleY(0.875);">Approved</div>
<div class="t" id="t47" style="left:82.68px;top:346px;font-size:10.0px;color:#6b6975;letter-spacing:-0.033px;transform-origin:0 8px;transform:scaleY(0.875);">duongnanhdung</div>
<div class="t" id="t48" style="left:192.98px;top:346px;font-size:10.0px;color:#6b6975;letter-spacing:-0.033px;transform-origin:0 8px;transform:scaleY(0.875);">duongnanhdung</div>
<div class="t" id="t49" style="left:304.00px;top:346px;font-size:10.0px;color:#6b6975;letter-spacing:-0.056px;transform-origin:0 8px;transform:scaleY(0.875);">Account</div>
<div class="t" id="t50" style="left:448.72px;top:346px;font-size:10.0px;color:#6b6975;letter-spacing:0.036px;transform-origin:0 8px;transform:scaleY(0.875);">-50.00</div>
<div class="t" id="t51" style="left:514.60px;top:346px;font-size:10.0px;color:#6b6975;letter-spacing:0.015px;transform-origin:0 8px;transform:scaleY(0.875);">Bank Account</div>
<div class="t" id="t52" style="left:617.22px;top:346px;font-size:10.0px;color:#6b6975;letter-spacing:-0.047px;transform-origin:0 8px;transform:scaleY(0.875);">2024-08-23 12:15:03</div>
<div class="t" id="t53" style="left:747.62px;top:346px;font-size:10.0px;color:#6b6975;letter-spacing:-0.043px;transform-origin:0 8px;transform:scaleY(0.875);">2024-08-23 12:41:04</div>
<div class="t" id="t54" style="left:879.40px;top:346px;font-size:10.0px;color:#776bd2;letter-spacing:-0.014px;transform-origin:0 8px;transform:scaleY(0.875);">Approved</div>
<div class="t" id="t55" style="left:82.68px;top:388px;font-size:10.0px;color:#6b6975;letter-spacing:-0.033px;transform-origin:0 8px;transform:scaleY(0.875);">duongnanhdung</div>
<div class="t" id="t56" style="left:192.98px;top:388px;font-size:10.0px;color:#6b6975;letter-spacing:-0.033px;transform-origin:0 8px;transform:scaleY(0.875);">duongnanhdung</div>
<div class="t" id="t57" style="left:304.00px;top:388px;font-size:10.0px;color:#6b6975;letter-spacing:-0.056px;transform-origin:0 8px;transform:scaleY(0.875);">Account</div>
<div class="t" id="t58" style="left:448.72px;top:388px;font-size:10.0px;color:#6b6975;letter-spacing:0.036px;transform-origin:0 8px;transform:scaleY(0.875);">-20.00</div>
<div class="t" id="t59" style="left:514.60px;top:388px;font-size:10.0px;color:#6b6975;letter-spacing:0.015px;transform-origin:0 8px;transform:scaleY(0.875);">Bank Account</div>
<div class="t" id="t60" style="left:617.22px;top:388px;font-size:10.0px;color:#6b6975;letter-spacing:-0.023px;transform-origin:0 8px;transform:scaleY(0.875);">2024-08-23 12:07:02</div>
<div class="t" id="t61" style="left:747.62px;top:388px;font-size:10.0px;color:#6b6975;letter-spacing:-0.006px;transform-origin:0 8px;transform:scaleY(0.875);">2024-08-23 12:12:22</div>
<div class="t" id="t62" style="left:879.40px;top:388px;font-size:10.0px;color:#776bd2;letter-spacing:-0.014px;transform-origin:0 8px;transform:scaleY(0.875);">Approved</div>
<div class="t" id="t63" style="left:88.70px;top:532px;font-size:10.0px;color:#776bd2;letter-spacing:-0.085px;transform-origin:0 8px;transform:scaleY(0.875);">Summary</div>
<div class="t" id="t64" style="left:131.70px;top:532px;font-size:10.0px;color:#776bd2;transform-origin:0 8px;transform:scaleY(0.875);">:</div>
<div class="t" id="t65" style="left:141.10px;top:532px;font-size:10.0px;color:#776bd2;letter-spacing:0.140px;transform-origin:0 8px;transform:scaleY(0.875);">569.03</div>
<div class="t" id="t66" style="left:74.87px;top:560px;font-size:10.0px;color:#6b6975;letter-spacing:-0.024px;transform-origin:0 8px;transform:scaleY(0.875);">COPYRIGHT © 2024 , All rights Reserved</div>
<div class="t" id="t67" style="left:52.20px;top:585px;font-size:10.0px;color:#3f3f3f;transform-origin:0 8px;transform:scale(1.0300,0.875);">Search</div>
<div class="t" id="t68" style="left:853.90px;top:585px;font-size:10.0px;color:#ffffff;transform-origin:0 8px;transform:scale(0.9834,0.875);">UV cao</div>
<div class="t" id="t69" style="left:966.30px;top:586px;font-size:8.3px;color:#ffffff;transform-origin:0 7px;transform:scale(0.9212,1);">ENG</div>
<div class="t" id="t70" style="left:991.25px;top:586px;font-size:8.3px;color:#ffffff;transform-origin:0 7px;transform:scale(1.0156,1);">11:06 AM</div>
<div class="t" id="t71" style="left:836.60px;top:587px;font-size:5.6px;color:#ffeede;font-weight:bold;transform-origin:0 4px;transform:scale(1.0957,1);">UV</div>
<div style="left:153px;top:6px;width:12px;height:16px;background:linear-gradient(90deg,rgba(249,220,217,0),rgba(249,220,217,.92))"></div>

</div>
</body>
</html>
